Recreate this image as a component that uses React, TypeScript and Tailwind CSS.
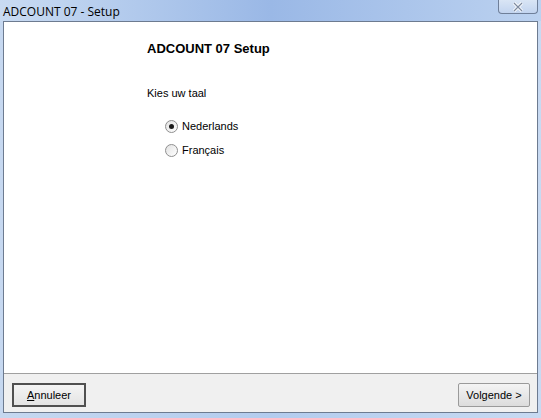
import React from 'react';

function Radio({ checked, label }: { checked?: boolean; label: string }) {
  return (
    <div className="flex items-center h-[13px]">
      <span className="w-[13px] h-[13px] rounded-full border border-[#8f8f8f] bg-gradient-to-br from-[#e2e2e2] to-white flex items-center justify-center">
        {checked && <span className="w-[5px] h-[5px] rounded-full bg-[#1b1b1b]" />}
      </span>
      <span className="ml-[4px]">{label}</span>
    </div>
  );
}

export default function App() {
  return (
    <div
      className="w-[541px] h-[418px] flex flex-col bg-gradient-to-r from-[#c6d8f0] via-[#b3ccee] to-[#c8daf2] text-black text-[11px]"
      style={{ fontFamily: 'Tahoma, "Liberation Sans", Arial, sans-serif' }}
    >
      <div className="h-[21px] flex items-start justify-between relative bg-gradient-to-r from-[#c9dbf2] via-[#9ab8e6] to-[#bcd2f0]">
        <span
          className="ml-[3px] mt-[3px] text-[12px] text-black"
          style={{ fontFamily: '"Open Sans", "Noto Sans", sans-serif' }}
        >
          ADCOUNT 07 - Setup
        </span>
        <div className="absolute left-[498px] top-0 w-[40px] h-[14px] rounded-b-[4px] border border-t-0 border-[#6f7f99] bg-gradient-to-b from-[#d9e5f5] to-[#c2d4ef] flex items-center justify-center">
          <svg width="12" height="10" viewBox="0 0 12 10">
            <path d="M2 1 L10 9 M10 1 L2 9" stroke="#ffffff" strokeWidth="3" />
            <path d="M2 1 L10 9 M10 1 L2 9" stroke="#7d8aa0" strokeWidth="1.2" />
          </svg>
        </div>
      </div>
      <div className="mx-[3px] flex-1 flex flex-col border border-[#6d7b90] bg-[#f0f0f0] mb-[5px]">
        <div className="h-[352px] bg-white border-b border-[#a0a0a0] pl-[143px] pt-[19px]">
          <div
            className="text-[13px] font-bold leading-[16px]"
            style={{ fontFamily: '"Liberation Sans", Arial, sans-serif' }}
          >
            ADCOUNT 07 Setup
          </div>
          <div className="mt-[30px] leading-[13px]">Kies uw taal</div>
          <div className="ml-[18px] mt-[20px] flex flex-col gap-[11px]">
            <Radio checked label="Nederlands" />
            <Radio label="Français" />
          </div>
        </div>
        <div className="flex-1 flex items-start justify-between px-[8px] pt-[9px]">
          <button className="w-[74px] h-[24px] border-2 border-[#505050] bg-gradient-to-b from-[#f4f4f4] to-[#e4e4e4] text-[11px]">
            <span className="underline">A</span>nnuleer
          </button>
          <button className="w-[72px] h-[24px] border border-[#9a9a9a] rounded-[2px] bg-gradient-to-b from-[#f4f4f4] to-[#dcdcdc] text-[11px] mr-[-1px]">
            Volgende &gt;
          </button>
        </div>
      </div>
    </div>
  );
}
